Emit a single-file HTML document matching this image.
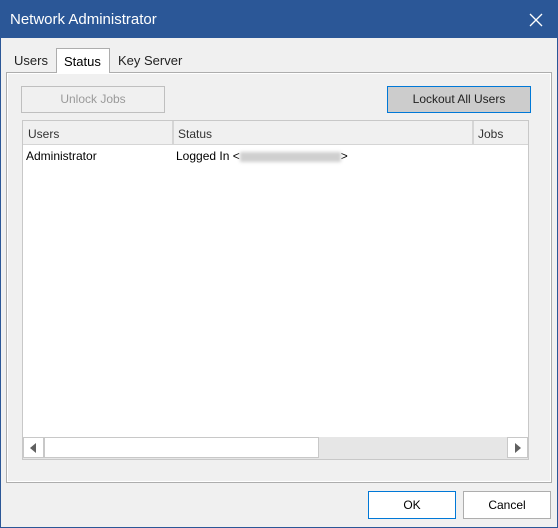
<!DOCTYPE html><html><head><style>
*{margin:0;padding:0;box-sizing:border-box}
body{width:558px;height:528px;background:#f0f0f0;font-family:"Liberation Sans",sans-serif;font-size:12px;position:relative;overflow:hidden;color:#000}
.a{position:absolute}
</style></head><body>
<div class="a" style="left:0;top:0;width:558px;height:528px;border:1px solid #2b5797;border-top:none"></div>
<div class="a" style="left:0;top:0;width:558px;height:38px;background:#2b5797;color:#fff;font-size:15px;padding:11px 0 0 10px">Network Administrator</div>
<svg class="a" style="left:529px;top:13px" width="14" height="14"><path d="M1 1L13 13M13 1L1 13" stroke="#fff" stroke-width="1.3"/></svg>
<div class="a" style="left:14px;top:53px;font-size:13px;color:#222">Users</div>
<div class="a" style="left:56px;top:48px;width:54px;height:25px;background:#fff;border:1px solid #adadad;border-bottom:none;z-index:2;font-size:13px;padding:5px 0 0 7px">Status</div>
<div class="a" style="left:118px;top:53px;font-size:13px;color:#222">Key Server</div>
<div class="a" style="left:6px;top:72px;width:546px;height:411px;border:1px solid #adadad;background:#f0f0f0;box-shadow:inset 1px 1px 0 #fff,inset -1px -1px 0 #fff"></div>
<div class="a" style="left:21px;top:86px;width:144px;height:27px;border:1px solid #bfbfbf;background:#f0f0f0;color:#9a9a9a;text-align:center;line-height:25px">Unlock Jobs</div>
<div class="a" style="left:387px;top:86px;width:144px;height:27px;border:1px solid #0078d7;background:#cccccc;color:#222;text-align:center;line-height:25px">Lockout All Users</div>
<div class="a" style="left:22px;top:120px;width:507px;height:340px;border:1px solid #c8c8c8;background:#fff"></div>
<div class="a" style="left:23px;top:121px;width:505px;height:24px;background:#f0f0f0;border-bottom:1px solid #d5d5d5"></div>
<div class="a" style="left:172px;top:121px;width:2px;height:24px;background:#d5d5d5"></div>
<div class="a" style="left:472px;top:121px;width:2px;height:24px;background:#d5d5d5"></div>
<div class="a" style="left:28px;top:127px;color:#333">Users</div>
<div class="a" style="left:178px;top:127px;color:#333">Status</div>
<div class="a" style="left:478px;top:127px;color:#333">Jobs</div>
<div class="a" style="left:26px;top:149px">Administrator</div>
<div class="a" style="left:176px;top:149px">Logged In &lt;<span style="display:inline-block;width:101px;height:10px;background:#cfcfcf;filter:blur(1.5px);vertical-align:middle"></span>&gt;</div>
<div class="a" style="left:23px;top:437px;width:505px;height:22px;background:#e6e6e6"></div>
<div class="a" style="left:23px;top:437px;width:21px;height:21px;background:#fff;border:1px solid #c8c8c8"></div>
<svg class="a" style="left:30px;top:443px" width="6" height="10"><path d="M6 0L0 5L6 10Z" fill="#606060"/></svg>
<div class="a" style="left:44px;top:437px;width:275px;height:21px;background:#fff;border:1px solid #c8c8c8"></div>
<div class="a" style="left:507px;top:437px;width:21px;height:21px;background:#fff;border:1px solid #c8c8c8"></div>
<svg class="a" style="left:515px;top:443px" width="6" height="10"><path d="M0 0L6 5L0 10Z" fill="#606060"/></svg>
<div class="a" style="left:368px;top:491px;width:88px;height:28px;border:1px solid #0078d7;background:#fff;text-align:center;line-height:26px">OK</div>
<div class="a" style="left:463px;top:491px;width:88px;height:28px;border:1px solid #adadad;background:#fff;text-align:center;line-height:26px">Cancel</div>
</body></html>
